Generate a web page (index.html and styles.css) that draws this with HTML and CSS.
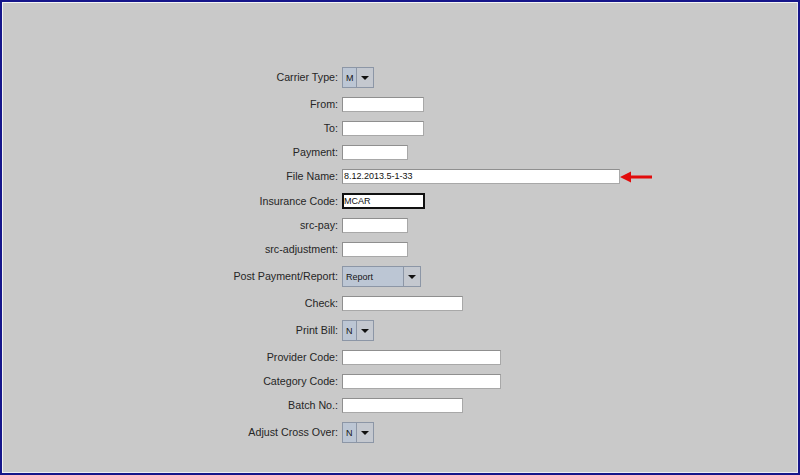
FILE: index.html
```html
<!DOCTYPE html>
<html>
<head>
<meta charset="utf-8">
<link rel="stylesheet" href="styles.css">
</head>
<body>
<div class="frame">
  <div class="inner">
    <div class="form">
      <label class="lbl">Carrier Type:</label>
      <div class="field"><div class="combo small"><span class="val">M</span><span class="btn"><span class="tri"></span></span></div></div>

      <label class="lbl">From:</label>
      <div class="field"><div class="input w82"></div></div>

      <label class="lbl">To:</label>
      <div class="field"><div class="input w82"></div></div>

      <label class="lbl">Payment:</label>
      <div class="field"><div class="input w66"></div></div>

      <label class="lbl">File Name:</label>
      <div class="field">
        <div class="input w278"><span class="txt">8.12.2013.5-1-33</span></div>
        <svg class="arrow" width="34" height="12" viewBox="0 0 34 12"><polygon points="0,6 11,0.5 11,4.6 32,4.6 32,7.4 11,7.4 11,11.5" fill="#e20b0b"/></svg>
      </div>

      <label class="lbl">Insurance Code:</label>
      <div class="field"><div class="input w83 focus"><span class="txt">MCAR</span></div></div>

      <label class="lbl">src-pay:</label>
      <div class="field"><div class="input w66"></div></div>

      <label class="lbl">src-adjustment:</label>
      <div class="field"><div class="input w66"></div></div>

      <label class="lbl">Post Payment/Report:</label>
      <div class="field"><div class="combo wide"><span class="val">Report</span><span class="btn"><span class="tri"></span></span></div></div>

      <label class="lbl">Check:</label>
      <div class="field"><div class="input w121"></div></div>

      <label class="lbl">Print Bill:</label>
      <div class="field"><div class="combo small"><span class="val">N</span><span class="btn"><span class="tri"></span></span></div></div>

      <label class="lbl">Provider Code:</label>
      <div class="field"><div class="input w159"></div></div>

      <label class="lbl">Category Code:</label>
      <div class="field"><div class="input w159"></div></div>

      <label class="lbl">Batch No.:</label>
      <div class="field"><div class="input w121"></div></div>

      <label class="lbl">Adjust Cross Over:</label>
      <div class="field"><div class="combo small"><span class="val">N</span><span class="btn"><span class="tri"></span></span></div></div>
    </div>
  </div>
</div>
</body>
</html>
```
FILE: styles.css
```css
html, body {
  margin: 0;
  padding: 0;
  width: 800px;
  height: 475px;
  overflow: hidden;
  background: #c9c9c9;
}

.frame {
  box-sizing: border-box;
  width: 800px;
  height: 475px;
  border: 2px solid #16168a;
  background: #c9c9c9;
}

.inner {
  box-sizing: border-box;
  height: 100%;
  border-top: 1px solid #f4f4f4;
  border-left: 1px solid #f4f4f4;
  border-right: 1px solid #e6e6ee;
  border-bottom: 1px solid #eeeef4;
  padding-top: 64px;
}

.form {
  display: grid;
  grid-template-columns: 335px auto;
  column-gap: 4px;
  row-gap: 9px;
  align-items: center;
  font-family: "Liberation Sans", Arial, sans-serif;
  font-size: 10.7px;
  color: #262626;
}

.lbl {
  text-align: right;
  line-height: 13px;
  white-space: nowrap;
}

.field {
  display: flex;
  align-items: center;
}

.input {
  box-sizing: border-box;
  height: 15px;
  background: #ffffff;
  border: 1px solid #8f8f8f;
  border-bottom-color: #a8a8a8;
  border-right-color: #a8a8a8;
  display: flex;
  align-items: center;
  padding-left: 1px;
}

.input.focus {
  height: 16px;
  border: 2px solid #101010;
  padding-left: 0;
}

.txt {
  font-size: 9px;
  color: #111;
  line-height: 11px;
}

.w66 { width: 66px; }
.w82 { width: 82px; }
.w83 { width: 83px; }
.w121 { width: 121px; }
.w159 { width: 159px; }
.w278 { width: 278px; }

.arrow {
  display: block;
}

.combo {
  box-sizing: border-box;
  height: 21px;
  display: flex;
  border: 1px solid #8c96a6;
  background: #bcc6d4;
}

.combo.small { width: 32px; }
.combo.wide { width: 79px; }

.combo .val {
  flex: 1;
  display: flex;
  align-items: center;
  padding-left: 3px;
  font-size: 9px;
  color: #151515;
  border-right: 1px solid #8c96a6;
}

.combo .btn {
  width: 16px;
  display: flex;
  align-items: center;
  justify-content: center;
  background: #c4c8cf;
}

.tri {
  width: 0;
  height: 0;
  border-left: 4px solid transparent;
  border-right: 4px solid transparent;
  border-top: 4px solid #111;
}
```
